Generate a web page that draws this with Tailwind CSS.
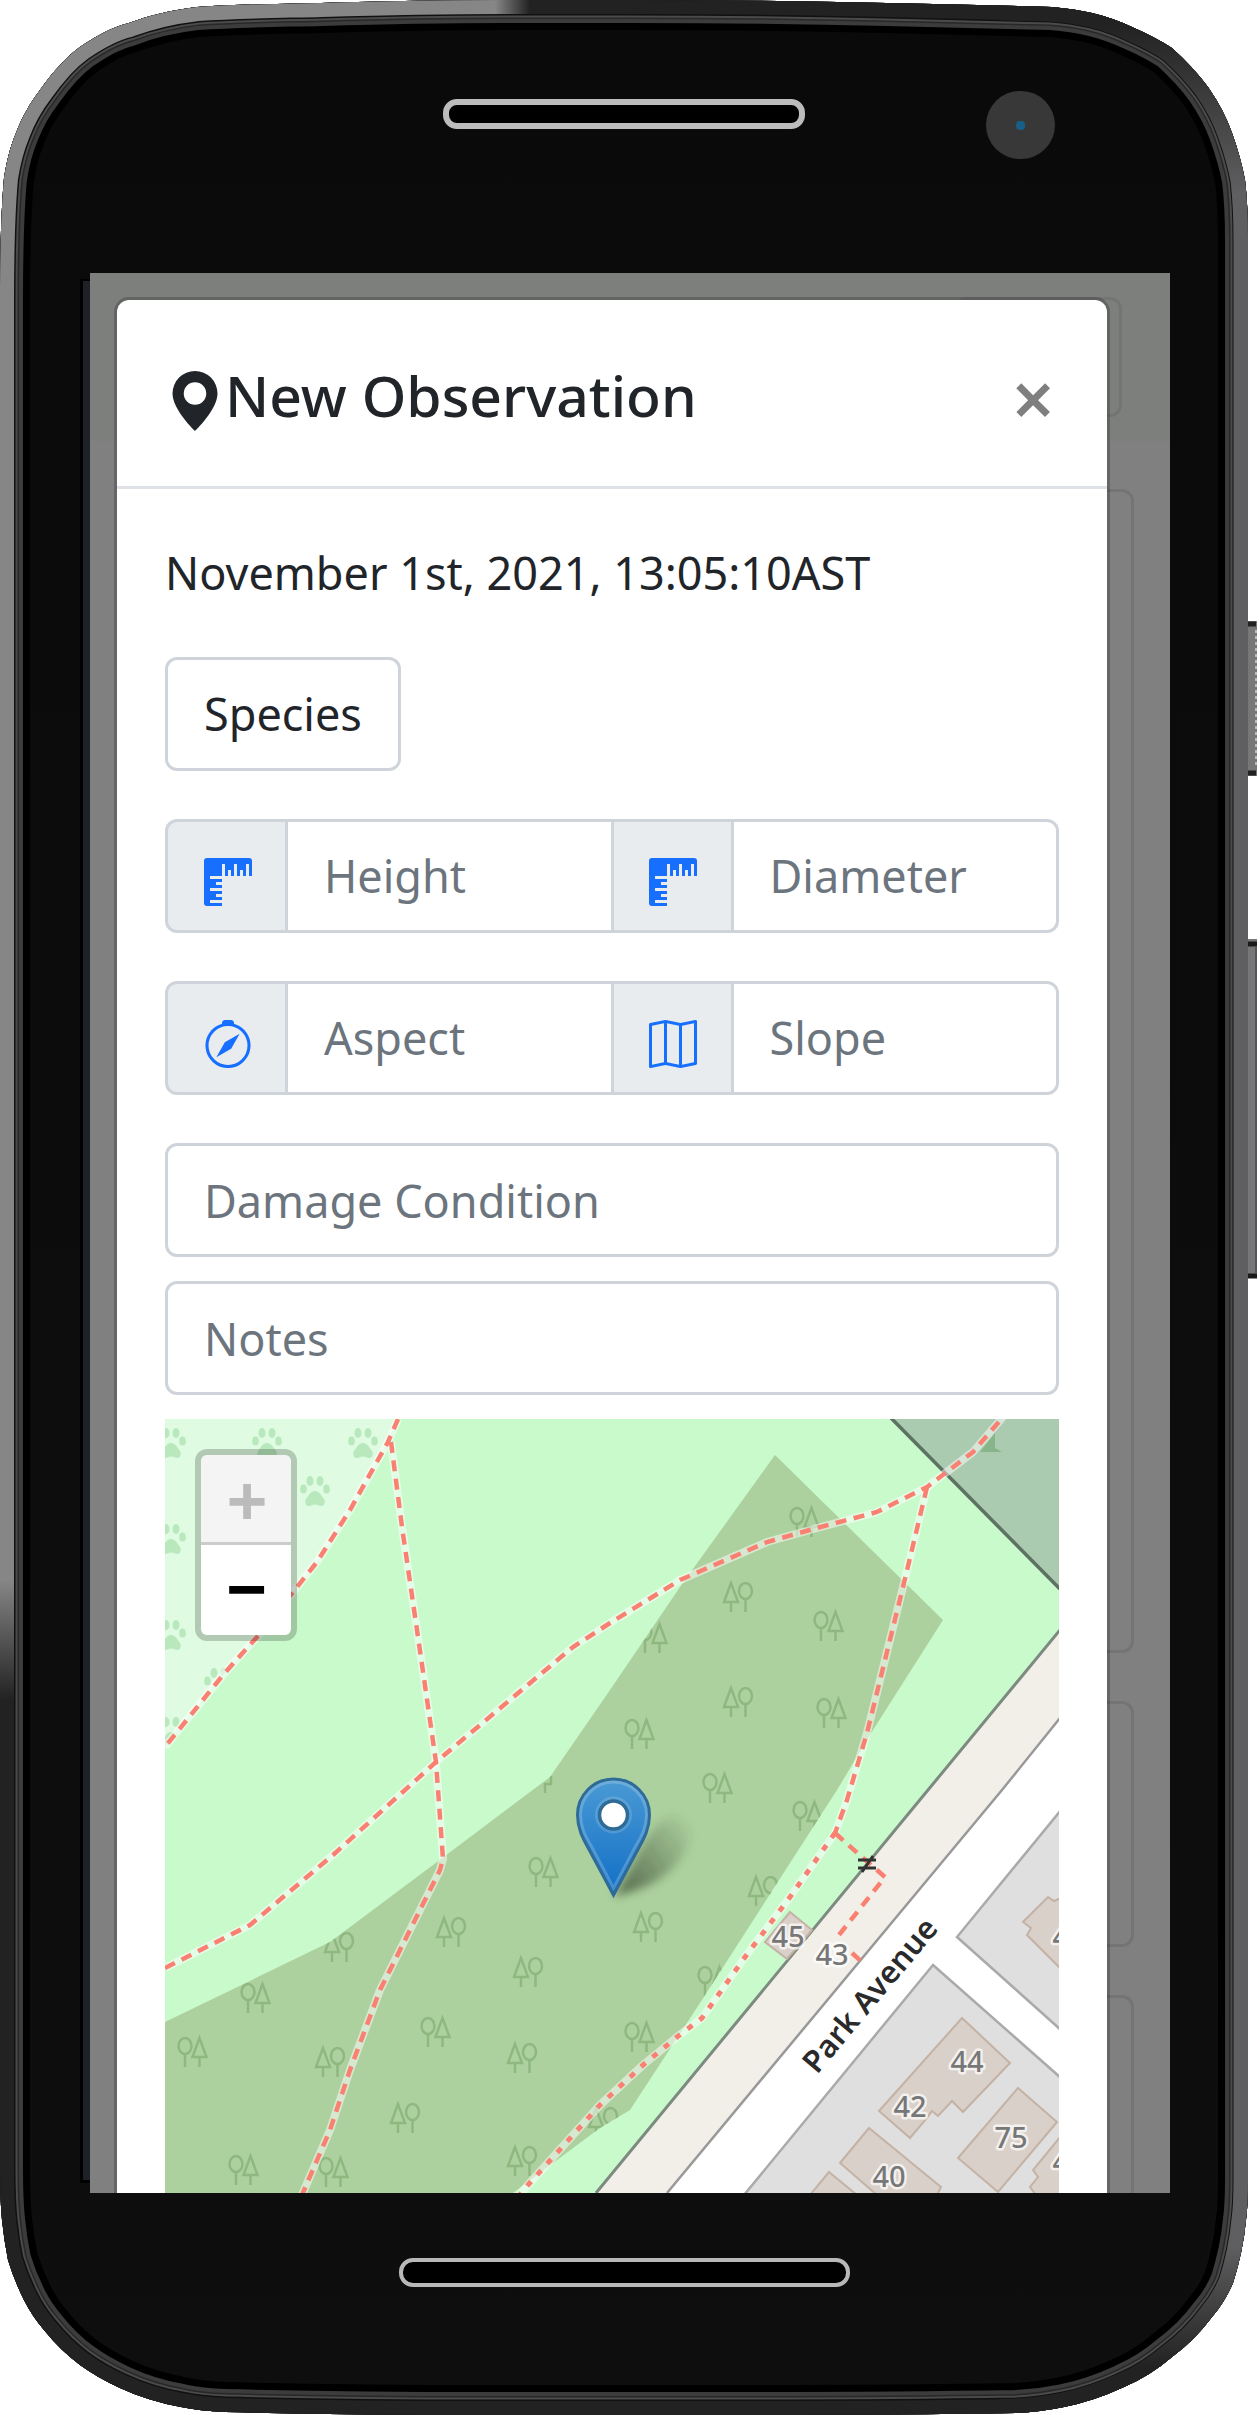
<!DOCTYPE html>
<html lang="en">
<head>
<meta charset="utf-8">
<meta name="viewport" content="width=device-width, initial-scale=1">
<title>New Observation</title>
<script src="https://cdn.jsdelivr.net/npm/@tailwindcss/browser@4"></script>
</head>
<body class="bg-white font-['Noto_Sans','Open_Sans',sans-serif] text-[#212529]">
<div class="relative w-full max-w-[1260px] pr-3">

  <!-- Phone body -->
  <svg class="absolute inset-0 h-full w-full" viewBox="0 0 1260 2415" preserveAspectRatio="none" aria-hidden="true">
    <defs>
      <path id="shell" d="M0 300C0 240 2 200 4 178C7 158 11 145 16 133C22 117 30 103 40 90C52 73 66 57 80 47C96 36 112 27 129 23C150 15 172 10 197 7C240 4 280 4 321 3Q420 0 502 0H630Q760 0 887 3Q980 5 1052 7Q1075 9 1092 13Q1113 18 1132 27Q1155 37 1172 48Q1194 68 1208 87Q1224 110 1232 133Q1241 158 1245 180Q1248 205 1248 240V2180Q1248 2205 1246 2220Q1243 2252 1233 2283Q1225 2302 1212 2317Q1195 2340 1172 2357Q1150 2376 1124 2387Q1094 2401 1064 2407Q1040 2412 1016 2413Q900 2415 760 2415H480Q350 2415 225 2412Q200 2411 181 2407Q148 2401 120 2388Q98 2378 80 2365Q60 2350 44 2330Q32 2316 24 2300Q14 2280 8 2260Q4 2240 2 2220Q0 2200 0 2170Z"/>
      <clipPath id="shellClip"><use href="#shell"/></clipPath>
      <clipPath id="leftClip"><rect x="0" y="0" width="530" height="1750"/></clipPath>
      <clipPath id="rightClip"><rect x="1000" y="0" width="248" height="2415"/></clipPath>
      <linearGradient id="leftFade" gradientUnits="userSpaceOnUse" x1="0" y1="1580" x2="0" y2="1700"><stop offset="0" stop-color="#868686"/><stop offset="1" stop-color="#222"/></linearGradient>
      <linearGradient id="topFade" gradientUnits="userSpaceOnUse" x1="495" y1="0" x2="530" y2="0"><stop offset="0" stop-color="#222" stop-opacity="0"/><stop offset="1" stop-color="#222"/></linearGradient>
      <linearGradient id="rightFade" gradientUnits="userSpaceOnUse" x1="0" y1="0" x2="0" y2="2415"><stop offset=".01" stop-color="#222"/><stop offset=".08" stop-color="#5f5f61"/><stop offset=".93" stop-color="#5f5f61"/><stop offset=".98" stop-color="#222"/></linearGradient>
      <linearGradient id="face" x1="0" y1="0" x2="0" y2="1"><stop offset="0" stop-color="#0a0a0a"/><stop offset="1" stop-color="#0e0e0e"/></linearGradient>
    </defs>
    <g clip-path="url(#shellClip)" fill="none">
      <use href="#shell" fill="url(#face)"/>
      <use href="#shell" stroke="#000" stroke-width="60"/>
      <use href="#shell" stroke="#3c3c3c" stroke-width="46"/>
      <use href="#shell" stroke="#282828" stroke-width="38"/>
      <use href="#shell" stroke="#4a4a4a" stroke-width="35"/>
      <use href="#shell" stroke="#111" stroke-width="31"/>
      <use href="#shell" stroke="#222" stroke-width="28"/>
      <g clip-path="url(#leftClip)"><use href="#shell" stroke="url(#leftFade)" stroke-width="28"/></g>
      <rect x="495" y="0" width="36" height="14" fill="url(#topFade)"/>
      <g clip-path="url(#rightClip)"><use href="#shell" stroke="url(#rightFade)" stroke-width="29"/></g>
    </g>
    <g>
      <rect x="1248" y="621" width="9" height="155" fill="#777"/><path d="M1256 630V768" stroke="#bbb" stroke-width="2" stroke-dasharray="3 3"/>
      <path d="M1248 624h8M1248 773h8" stroke="#222" stroke-width="5"/>
      <rect x="1248" y="939" width="9" height="339" fill="#77777a"/><path d="M1248 944h9M1248 1276h9" stroke="#1a1a1a" stroke-width="5"/><path d="M1256 946V1274" stroke="#555" stroke-width="2"/>
      <rect x="80" y="279" width="10" height="1904" fill="#000"/><rect x="83" y="281" width="7" height="1899" fill="#1e2127"/>
    </g>
  </svg>

  <div class="relative">
    <!-- Earpiece and camera -->
    <div class="grid h-[273px] grid-cols-[1fr_362px_1fr] items-start">
      <div></div>
      <div class="mt-[99px] h-[30px] rounded-[14px] border-6 border-[#bcbcbc] bg-black"></div>
      <div class="mt-[91px] ml-[181px] flex h-[68px] w-[69px] items-center justify-center rounded-full bg-[#383838]"><div class="size-[9px] rounded-sm bg-[#175f88]"></div></div>
    </div>

    <!-- Screen -->
    <div class="relative mr-[78px] ml-[90px] overflow-hidden bg-[#808080]">
      <div class="absolute inset-0 flex flex-col" aria-hidden="true">
        <div class="h-[168px] shrink-0 bg-[#7c7f7c] px-12 pt-6"><div class="ml-auto h-[120px] w-[168px] rounded-xl border-3 border-[#737573]"></div></div>
        <div class="flex flex-col gap-12 px-9 pt-12">
          <div class="h-[1164px] shrink-0 rounded-xl border-3 border-[#747474]"></div>
          <div class="h-[246px] shrink-0 rounded-xl border-3 border-[#747474]"></div>
          <div class="h-[246px] shrink-0 rounded-xl border-3 border-[#747474]"></div>
        </div>
      </div>

      <main class="relative mt-6 mr-[60px] ml-6 rounded-t-[15px] border-3 border-b-0 border-black/20 bg-white bg-clip-padding" role="dialog" aria-labelledby="title">
        <header class="flex items-start justify-between border-b-3 border-[#dee2e6] px-12 pt-12 pb-11">
          <h5 id="title" class="flex items-center pt-0.5 pb-0.5 text-[57px] leading-[90px] font-medium">
            <svg class="mt-3 size-[60px]" viewBox="0 0 16 16" fill="currentColor" aria-hidden="true"><path d="M8 16s6-5.686 6-10A6 6 0 0 0 2 6c0 4.314 6 10 6 10zm0-7a3 3 0 1 1 0-6 3 3 0 0 1 0 6z"/></svg>New Observation</h5>
          <button type="button" aria-label="Close" class="mr-1 h-[94px] text-[76px] leading-[100px] font-semibold text-black/50">×</button>
        </header>

        <form class="px-12 pt-12 text-[45px] leading-[72px]">
          <p>November 1st, 2021, 13:05:10AST</p>
          <button type="button" class="mt-12 block h-[114px] rounded-xl border-3 border-[#ced4da] px-9">Species</button>

          <div class="mt-12 flex h-[114px]">
            <label for="height" class="flex w-[123px] shrink-0 items-center justify-center rounded-l-xl border-3 border-[#ced4da] bg-[#e9ecef] pt-3 pl-0.5">
              <svg class="size-12" viewBox="0 0 16 16" fill="#176fff" aria-label="Height"><path d="M1 0a1 1 0 0 0-1 1v14a1 1 0 0 0 1 1h5v-1H2v-1h4v-1H4v-1h2v-1H2v-1h4V9H4V8h2V7H2V6h4V2h1v4h1V4h1v2h1V2h1v4h1V4h1v2h1V2h1v4h1V1a1 1 0 0 0-1-1H1z"/></svg>
            </label>
            <input id="height" type="text" placeholder="Height" class="-ml-[3px] w-0 flex-1 border-3 border-[#ced4da] bg-white px-9 placeholder:text-[#6c757d]">
            <label for="diameter" class="-ml-[3px] flex w-[123px] shrink-0 items-center justify-center border-3 border-[#ced4da] bg-[#e9ecef] pt-3 pl-0.5">
              <svg class="size-12" viewBox="0 0 16 16" fill="#176fff" aria-label="Diameter"><path d="M1 0a1 1 0 0 0-1 1v14a1 1 0 0 0 1 1h5v-1H2v-1h4v-1H4v-1h2v-1H2v-1h4V9H4V8h2V7H2V6h4V2h1v4h1V4h1v2h1V2h1v4h1V4h1v2h1V2h1v4h1V1a1 1 0 0 0-1-1H1z"/></svg>
            </label>
            <input id="diameter" type="text" placeholder="Diameter" class="-ml-[3px] w-0 flex-1 rounded-r-xl border-3 border-[#ced4da] bg-white px-9 placeholder:text-[#6c757d]">
          </div>

          <div class="mt-12 flex h-[114px]">
            <label for="aspect" class="flex w-[123px] shrink-0 items-center justify-center rounded-l-xl border-3 border-[#ced4da] bg-[#e9ecef] pt-3 pl-0.5">
              <svg class="size-12" viewBox="0 0 16 16" fill="#176fff" aria-label="Aspect"><path d="M8 16.016a7.5 7.5 0 0 0 1.962-14.74A1 1 0 0 0 9 0H7a1 1 0 0 0-.962 1.276A7.5 7.5 0 0 0 8 16.016zm6.5-7.5a6.5 6.5 0 1 1-13 0 6.5 6.5 0 0 1 13 0z"/><path d="M6.94 7.44l4.95-2.83-2.83 4.95-4.949 2.83 2.828-4.95z"/></svg>
            </label>
            <input id="aspect" type="text" placeholder="Aspect" class="-ml-[3px] w-0 flex-1 border-3 border-[#ced4da] bg-white px-9 placeholder:text-[#6c757d]">
            <label for="slope" class="-ml-[3px] flex w-[123px] shrink-0 items-center justify-center border-3 border-[#ced4da] bg-[#e9ecef] pt-3 pl-0.5">
              <svg class="size-12" viewBox="0 0 16 16" fill="#176fff" aria-label="Slope"><path fill-rule="evenodd" d="M15.817.113A.5.5 0 0 1 16 .5v14a.5.5 0 0 1-.402.49l-5 1a.502.502 0 0 1-.196 0L5.5 15.01l-4.902.98A.5.5 0 0 1 0 15.5v-14a.5.5 0 0 1 .402-.49l5-1a.5.5 0 0 1 .196 0L10.5.99l4.902-.98a.5.5 0 0 1 .415.103zM10 1.91l-4-.8v12.98l4 .8V1.91zm1 12.98l4-.8V1.11l-4 .8v12.98zm-6-.8V1.11l-4 .8v12.98l4-.8z"/></svg>
            </label>
            <input id="slope" type="text" placeholder="Slope" class="-ml-[3px] w-0 flex-1 rounded-r-xl border-3 border-[#ced4da] bg-white px-9 placeholder:text-[#6c757d]">
          </div>

          <input type="text" aria-label="Damage Condition" placeholder="Damage Condition" class="mt-12 block h-[114px] w-full rounded-xl border-3 border-[#ced4da] bg-white px-9 placeholder:text-[#6c757d]">
          <input type="text" aria-label="Notes" placeholder="Notes" class="mt-6 block h-[114px] w-full rounded-xl border-3 border-[#ced4da] bg-white px-9 placeholder:text-[#6c757d]">

          <!-- Map -->
          <div class="relative mt-6 overflow-hidden">
            <svg class="block w-full" viewBox="165 1419 894 774" role="img" aria-label="Map around Park Avenue">
              <defs>
                <g id="ot" fill="none" stroke="#8fb881" stroke-width="2.5"><ellipse cx="8" cy="9" rx="6.5" ry="8"/><path d="M8 17V30M22.500 1L15.500 20H29.500ZM22.500 20V30"/></g>
                <g id="to" fill="none" stroke="#8fb881" stroke-width="2.5"><ellipse cx="22.500" cy="9" rx="6.500" ry="8"/><path d="M22.500 17V30M8 1L1 20H15ZM8 20V30"/></g>
                <g id="paw" fill="#b8e8bc"><ellipse cx="10" cy="5" rx="3.500" ry="5"/><ellipse cx="20" cy="5" rx="3.500" ry="5"/><ellipse cx="3.500" cy="13" rx="3.300" ry="4.500"/><ellipse cx="26.500" cy="13" rx="3.300" ry="4.500"/><path d="M15 15c4 0 6 4 8 6.500c3 3 2 8.500-1.500 8.500c-2 0-4-1.500-6.500-1.500s-4.500 1.500-6.500 1.500c-3.500 0-4.500-5.500-1.500-8.500c2-2.500 4-6.500 8-6.500z"/></g>
                <path id="wood" d="M775 1455L943 1620L873 1730L837 1790L700 2003L630 2110L600 2128L557 2160L513 2193H165V2022L330 1942L437 1862L550 1777L610 1690L680 1587Z"/>
                <path id="dogs" d="M165 1419H397L388 1442L350 1510L317 1562L293 1592L257 1637L223 1675L165 1747Z"/>
                <clipPath id="woodClip"><use href="#wood"/></clipPath>
                <clipPath id="dogClip"><use href="#dogs"/></clipPath>
                <path id="pA" d="M398 1419L388 1442L350 1510L317 1562L293 1592L257 1637L223 1675L165 1747"/>
                <path id="pB" d="M391 1442L402 1527L417 1630L436 1762L443 1859L440 1870L380 1990L350 2070L330 2130L302 2195"/>
                <path id="pC" d="M165 1968L250 1925L333 1855L436 1762L573 1647L610 1623L680 1580L767 1542L817 1528L877 1512L927 1487L973 1452L1003 1417"/>
                <path id="pD" d="M927 1487L903 1587L867 1733L847 1800L835 1833"/>
                <path id="pE" d="M835 1833L790 1897L745 1957L702 2018L677 2037L643 2065L600 2105L528 2185L518 2197"/>
                <path id="pF" d="M835 1833L863 1858L885 1877L835 1940"/>
                <linearGradient id="pin" x1="0" y1="0" x2="0" y2="1"><stop offset="0" stop-color="#4a9ad4"/><stop offset="1" stop-color="#126fc6"/></linearGradient>
                <linearGradient id="shade" gradientUnits="userSpaceOnUse" x1="616" y1="1880" x2="692" y2="1820"><stop offset="0" stop-color="#2f3f2a" stop-opacity=".65"/><stop offset="1" stop-color="#2f3f2a" stop-opacity="0"/></linearGradient>
                <filter id="soft" x="-30%" y="-30%" width="160%" height="160%"><feGaussianBlur stdDeviation="5"/></filter>
              </defs>
              <rect x="165" y="1419" width="894" height="774" fill="#c8facc"/>
              <use href="#dogs" fill="#dffce2"/>
              <g clip-path="url(#dogClip)"><use href="#paw" x="252" y="1428"/><use href="#paw" x="348" y="1428"/><use href="#paw" x="300" y="1476"/><use href="#paw" x="156" y="1428"/><use href="#paw" x="156" y="1524"/><use href="#paw" x="156" y="1620"/><use href="#paw" x="204" y="1668"/><use href="#paw" x="156" y="1717"/></g>
              <use href="#wood" fill="#add19e"/>
              <g clip-path="url(#woodClip)">
                <use href="#ot" x="789" y="1507"/><use href="#to" x="723" y="1582"/><use href="#ot" x="813" y="1611"/><use href="#ot" x="637" y="1623"/><use href="#to" x="723" y="1687"/><use href="#ot" x="816" y="1698"/><use href="#ot" x="624" y="1719"/><use href="#ot" x="702" y="1773"/>
                <use href="#ot" x="792" y="1801"/><use href="#to" x="748" y="1876"/><use href="#to" x="633" y="1912"/><use href="#ot" x="697" y="1966"/><use href="#ot" x="624" y="2022"/><use href="#to" x="588" y="2107"/>
                <use href="#ot" x="528" y="1857"/><use href="#to" x="436" y="1917"/><use href="#to" x="513" y="1957"/><use href="#ot" x="420" y="2017"/><use href="#to" x="507" y="2043"/><use href="#to" x="324" y="1932"/><use href="#ot" x="240" y="1983"/><use href="#ot" x="177" y="2037"/><use href="#to" x="315" y="2047"/><use href="#to" x="390" y="2103"/><use href="#ot" x="228" y="2155"/><use href="#ot" x="318" y="2157"/><use href="#to" x="507" y="2146"/>
                <path d="M545 1793V1784H551V1776" fill="none" stroke="#8fb881" stroke-width="2.5"/>
              </g>
              <path d="M892 1419H1059V1590Z" fill="#aacbaf"/>
              <path d="M891 1418L1060 1589" stroke="#5d7262" stroke-width="3.500"/>
              <path d="M995 1433L980 1452H1002L995 1448Z" fill="#86b58a"/>
              <path d="M1059 1630L928 1790L596 2193H1059Z" fill="#f2efe9"/>
              <path d="M1059 1718L1002 1790L667 2193H1059Z" fill="#fff"/>
              <path d="M1060 1630L928 1790L596 2193" fill="none" stroke="#7d8a80" stroke-width="3"/>
              <path d="M1060 1718L1002 1790L667 2193" fill="none" stroke="#999" stroke-width="2.500"/>
              <path d="M1061 1810L957 1937L1061 2030ZM933 1965L1061 2078V2195H744Z" fill="#dfdfdf" stroke="#aaa" stroke-width="2.500"/>
              <g fill="#d9d0c9" stroke="#c4b2a5" stroke-width="2">
                <path d="M790 1912L812 1930L787 1959L765 1942Z"/>
                <path d="M962 2018L1010 2063L963 2112L952 2101L938 2116L932 2111L927 2118L910 2138L879 2111Z"/>
                <path d="M1018 2088L1057 2122L998 2192L958 2158Z"/>
                <path d="M869 2128L941 2187L937 2195H877L840 2163Z"/>
                <path d="M829 2172L857 2195H810Z"/>
                <path d="M1061 2136L1033 2170L1038 2177L1030 2187L1036 2195H1061Z"/>
                <path d="M1061 1898L1054 1901L1048 1897L1023 1922L1031 1928L1027 1935L1061 1969Z"/>
              </g>
              <g fill="none" stroke="#fff" stroke-opacity=".5" stroke-width="8" stroke-linejoin="round"><use href="#pA"/><use href="#pB"/><use href="#pC"/><use href="#pD"/><use href="#pE"/></g>
              <g fill="none" stroke="#fa8072" stroke-width="4.500" stroke-dasharray="11 7.500"><use href="#pA"/><use href="#pB"/><use href="#pC"/><use href="#pD"/><use href="#pF"/><path d="M852 1953L862 1962"/></g>
              <use href="#pE" fill="none" stroke="#fa8072" stroke-width="5" stroke-dasharray="6 9"/>
              <path d="M858 1860H876M858 1868H876M862 1872L873 1856" stroke="#333" stroke-width="3"/>
              <g font-family="Noto Sans, Open Sans, sans-serif" font-size="29" font-weight="500" text-anchor="middle" fill="#777" stroke="#fff" stroke-opacity=".7" stroke-width="5" stroke-linejoin="round" paint-order="stroke">
                <text x="788" y="1947">45</text><text x="832" y="1965">43</text><text x="967" y="2072">44</text><text x="910" y="2117">42</text><text x="1011" y="2148">75</text><text x="889" y="2187">40</text><text x="1069" y="1947">42</text><text x="1069" y="2172">44</text>
              </g>
              <text transform="translate(817 2075) rotate(-50)" font-family="Noto Sans, Open Sans, sans-serif" font-size="31" font-weight="600" fill="#2a2a2a">Park Avenue</text>
              <path d="M614 1897L640 1850C656 1818 676 1808 688 1822C698 1842 676 1876 640 1889Z" fill="url(#shade)" filter="url(#soft)"/>
              <path d="M577.500 1815A36 36 0 0 1 649.500 1815C649.500 1832 641 1843 635 1855L613.500 1895L592 1855C586 1843 577.500 1832 577.500 1815Z" fill="url(#pin)" stroke="#2e6c97" stroke-width="3"/>
              <path d="M580.500 1815A33 33 0 0 1 646.500 1815C646.500 1831 638 1841 632 1853L613.500 1888L595 1853C589 1841 580.500 1831 580.500 1815Z" fill="none" stroke="#fff" stroke-opacity=".2" stroke-width="3"/>
              <circle cx="613.500" cy="1815" r="17" fill="none" stroke="#fff" stroke-opacity=".15" stroke-width="3"/>
              <circle cx="613.500" cy="1815" r="14" fill="#fff" stroke="#2e6c97" stroke-width="3.500"/>
            </svg>
            <div class="absolute top-[30px] left-[30px] w-[102px] overflow-hidden rounded-xl border-6 border-black/20 bg-clip-padding text-[72px] leading-[90px] font-bold">
              <button type="button" aria-label="Zoom in" disabled class="block h-[90px] w-full rounded-t-md border-b-3 border-[#ccc] bg-[#f4f4f4] pl-0.5 leading-[84px] text-[#bbb]">+</button>
              <button type="button" aria-label="Zoom out" class="block h-[90px] w-full rounded-b-md bg-white pb-1.5 pl-0.5 leading-[78px] text-black">−</button>
            </div>
          </div>
        </form>
      </main>
    </div>

    <!-- Bottom speaker -->
    <div class="flex h-[222px] items-start justify-center"><div class="mt-[65px] h-[29px] w-[451px] rounded-[14px] border-4 border-[#b8b8b8] bg-black"></div></div>
  </div>
</div>
</body>
</html>
